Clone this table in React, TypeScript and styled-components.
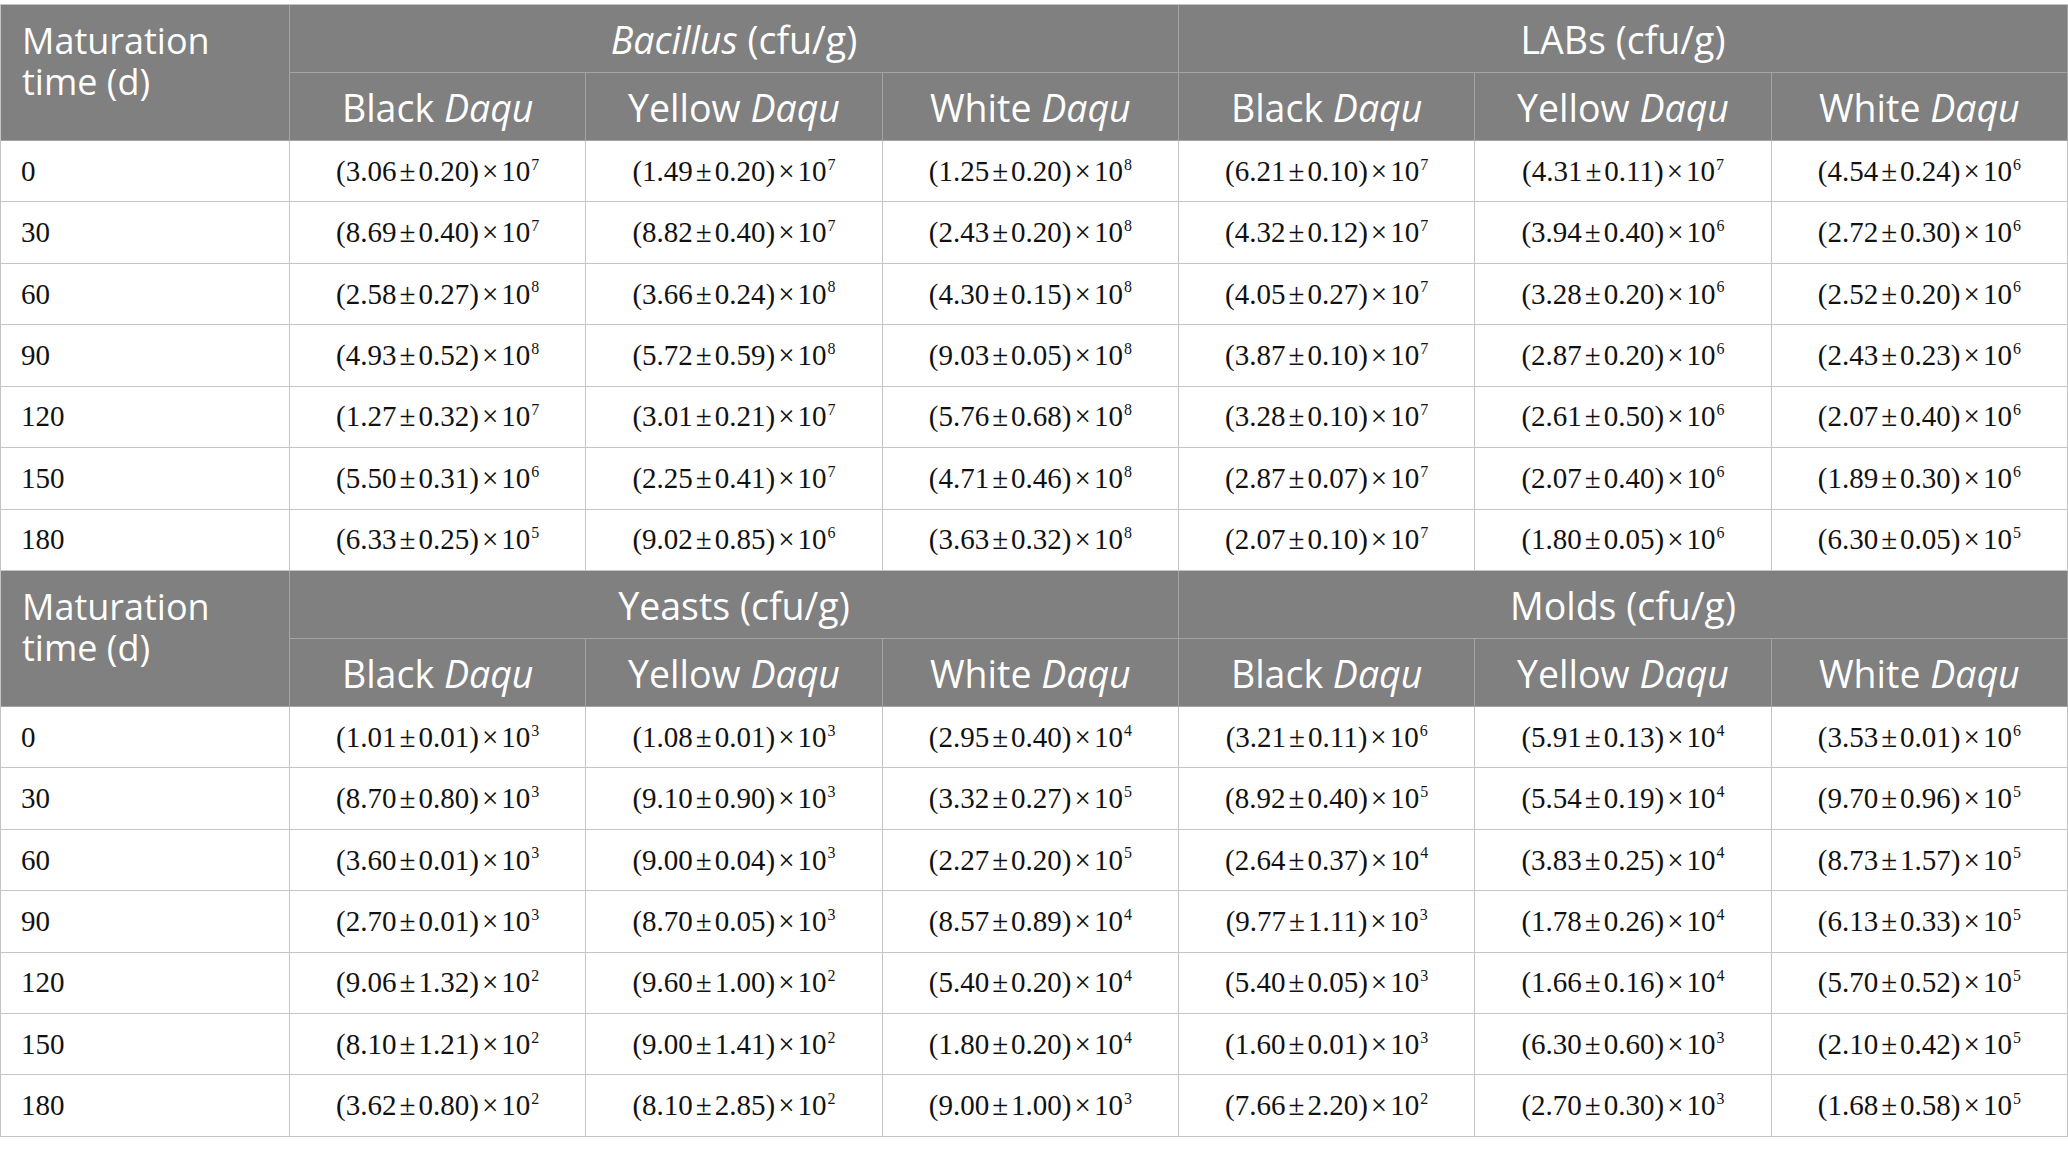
import React from "react";
import styled, { createGlobalStyle } from "styled-components";

const GlobalStyle = createGlobalStyle`
  html, body { margin: 0; padding: 0; background: #ffffff; }
  #root { width: 2068px; }
`;

const Page = styled.div`
  padding-top: 4px;
  width: 2068px;
`;

const Table = styled.table`
  width: 2068px;
  table-layout: fixed;
  border-collapse: separate;
  border-spacing: 0;
  border-top: 1px solid #c4c4c4;
  border-left: 1px solid #c4c4c4;
`;

const HeadCell = styled.th<{ $first?: boolean }>`
  box-sizing: border-box;
  height: 68px;
  background: #7f807f;
  color: #ffffff;
  font-family: "Open Sans", "Noto Sans", sans-serif;
  font-weight: 400;
  font-size: ${(p) => (p.$first ? "36px" : "37.5px")};
  line-height: 41px;
  text-align: ${(p) => (p.$first ? "left" : "center")};
  vertical-align: ${(p) => (p.$first ? "top" : "middle")};
  padding: ${(p) => (p.$first ? "15px 10px 0 21px" : "2px 4px 0 4px")};
  border-right: 1px solid #a2a3a2;
  border-bottom: 1px solid #a2a3a2;
  white-space: normal;
  em { font-style: italic; }
`;

const BodyCell = styled.td<{ $first?: boolean }>`
  box-sizing: border-box;
  height: 61.43px;
  padding: ${(p) => (p.$first ? "0 8px 0 20px" : "0 4px")};
  font-family: "Liberation Serif", "Times New Roman", serif;
  font-size: 29px;
  color: #111111;
  text-align: ${(p) => (p.$first ? "left" : "center")};
  vertical-align: middle;
  border-right: 1px solid #c4c4c4;
  border-bottom: 1px solid #c4c4c4;
  white-space: nowrap;
`;

const Op = styled.span`
  margin: 0 3px;
`;

const Sup = styled.sup`
  font-size: 0.55em;
  vertical-align: 0.7em;
  line-height: 0;
  margin-left: 1px;
`;

const Value: React.FC<{ v: string }> = ({ v }) => {
  const [m, s, e] = v.split("|");
  return (
    <>
      ({m}
      <Op>±</Op>
      {s})<Op>×</Op>10<Sup>{e}</Sup>
    </>
  );
};

type Block = {
  groups: [React.ReactNode, React.ReactNode];
  rows: [string, string[]][];
};

const blocks: Block[] = [
  {
    groups: [
      <>
        <em>Bacillus</em> (cfu/g)
      </>,
      <>LABs (cfu/g)</>,
    ],
    rows: [
      ["0", ["3.06|0.20|7", "1.49|0.20|7", "1.25|0.20|8", "6.21|0.10|7", "4.31|0.11|7", "4.54|0.24|6"]],
      ["30", ["8.69|0.40|7", "8.82|0.40|7", "2.43|0.20|8", "4.32|0.12|7", "3.94|0.40|6", "2.72|0.30|6"]],
      ["60", ["2.58|0.27|8", "3.66|0.24|8", "4.30|0.15|8", "4.05|0.27|7", "3.28|0.20|6", "2.52|0.20|6"]],
      ["90", ["4.93|0.52|8", "5.72|0.59|8", "9.03|0.05|8", "3.87|0.10|7", "2.87|0.20|6", "2.43|0.23|6"]],
      ["120", ["1.27|0.32|7", "3.01|0.21|7", "5.76|0.68|8", "3.28|0.10|7", "2.61|0.50|6", "2.07|0.40|6"]],
      ["150", ["5.50|0.31|6", "2.25|0.41|7", "4.71|0.46|8", "2.87|0.07|7", "2.07|0.40|6", "1.89|0.30|6"]],
      ["180", ["6.33|0.25|5", "9.02|0.85|6", "3.63|0.32|8", "2.07|0.10|7", "1.80|0.05|6", "6.30|0.05|5"]],
    ],
  },
  {
    groups: [<>Yeasts (cfu/g)</>, <>Molds (cfu/g)</>],
    rows: [
      ["0", ["1.01|0.01|3", "1.08|0.01|3", "2.95|0.40|4", "3.21|0.11|6", "5.91|0.13|4", "3.53|0.01|6"]],
      ["30", ["8.70|0.80|3", "9.10|0.90|3", "3.32|0.27|5", "8.92|0.40|5", "5.54|0.19|4", "9.70|0.96|5"]],
      ["60", ["3.60|0.01|3", "9.00|0.04|3", "2.27|0.20|5", "2.64|0.37|4", "3.83|0.25|4", "8.73|1.57|5"]],
      ["90", ["2.70|0.01|3", "8.70|0.05|3", "8.57|0.89|4", "9.77|1.11|3", "1.78|0.26|4", "6.13|0.33|5"]],
      ["120", ["9.06|1.32|2", "9.60|1.00|2", "5.40|0.20|4", "5.40|0.05|3", "1.66|0.16|4", "5.70|0.52|5"]],
      ["150", ["8.10|1.21|2", "9.00|1.41|2", "1.80|0.20|4", "1.60|0.01|3", "6.30|0.60|3", "2.10|0.42|5"]],
      ["180", ["3.62|0.80|2", "8.10|2.85|2", "9.00|1.00|3", "7.66|2.20|2", "2.70|0.30|3", "1.68|0.58|5"]],
    ],
  },
];

const kinds = ["Black", "Yellow", "White"];

export default function App() {
  return (
    <>
      <GlobalStyle />
      <Page>
        <Table>
          <colgroup>
            <col style={{ width: 289 }} />
            <col />
            <col />
            <col />
            <col />
            <col />
            <col />
          </colgroup>
          {blocks.map((b, bi) => (
            <tbody key={bi}>
              <tr>
                <HeadCell $first rowSpan={2}>
                  Maturation time (d)
                </HeadCell>
                <HeadCell colSpan={3}>{b.groups[0]}</HeadCell>
                <HeadCell colSpan={3}>{b.groups[1]}</HeadCell>
              </tr>
              <tr>
                {[0, 1].flatMap((g) =>
                  kinds.map((k) => (
                    <HeadCell key={`${g}-${k}`}>
                      {k} <em>Daqu</em>
                    </HeadCell>
                  ))
                )}
              </tr>
              {b.rows.map(([t, vals]) => (
                <tr key={t}>
                  <BodyCell $first>{t}</BodyCell>
                  {vals.map((v, i) => (
                    <BodyCell key={i}>
                      <Value v={v} />
                    </BodyCell>
                  ))}
                </tr>
              ))}
            </tbody>
          ))}
        </Table>
      </Page>
    </>
  );
}
